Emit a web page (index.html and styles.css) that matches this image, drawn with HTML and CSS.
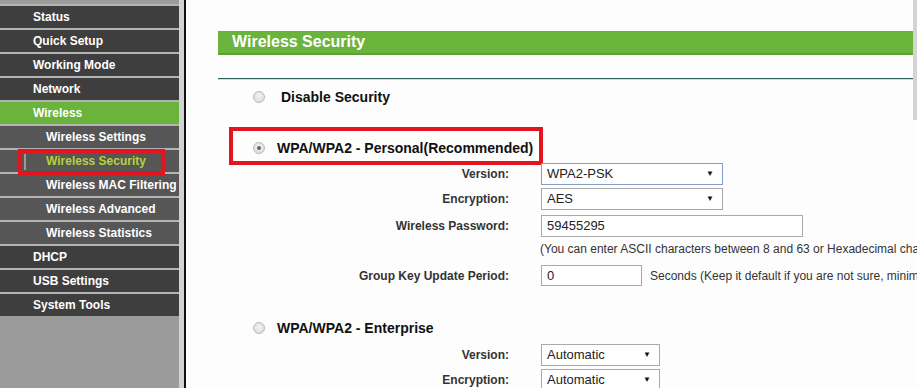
FILE: index.html
```html
<!DOCTYPE html>
<html>
<head>
<meta charset="utf-8">
<link rel="stylesheet" href="styles.css">
</head>
<body>
<nav class="sidebar">
  <ul class="menu">
    <li class="item">Status</li>
    <li class="item">Quick Setup</li>
    <li class="item">Working Mode</li>
    <li class="item">Network</li>
    <li class="item active">Wireless</li>
    <li class="item sub">Wireless Settings</li>
    <li class="item sub current"><span class="mark"></span>Wireless Security<span class="hl-box"></span></li>
    <li class="item sub">Wireless MAC Filtering</li>
    <li class="item sub">Wireless Advanced</li>
    <li class="item sub">Wireless Statistics</li>
    <li class="item">DHCP</li>
    <li class="item">USB Settings</li>
    <li class="item">System Tools</li>
  </ul>
</nav>
<main class="main">
  <div class="content">
    <h1 class="title">Wireless Security</h1>
    <div class="rule"></div>

    <div class="option opt-disable"><span class="radio"></span><span class="opt-label">Disable Security</span></div>

    <div class="option opt-personal"><span class="radio checked"></span><span class="opt-label">WPA/WPA2 - Personal(Recommended)</span></div>

    <div class="form">
      <div class="row r-version">
        <label class="lbl">Version:</label>
        <div class="select focus w182"><span>WPA2-PSK</span><span class="arrow">▼</span></div>
      </div>
      <div class="row r-enc">
        <label class="lbl">Encryption:</label>
        <div class="select w182"><span>AES</span><span class="arrow">▼</span></div>
      </div>
      <div class="row r-pwd">
        <label class="lbl">Wireless Password:</label>
        <div class="input w262">59455295</div>
      </div>
      <div class="row r-help">
        <span class="lbl"></span>
        <span class="help">(You can enter ASCII characters between 8 and 63 or Hexadecimal characters between 8 and 64.)</span>
      </div>
      <div class="row r-group">
        <label class="lbl">Group Key Update Period:</label>
        <div class="input w101">0</div>
        <span class="note">Seconds (Keep it default if you are not sure, minimum is 30, 0 means no update)</span>
      </div>
    </div>

    <div class="option opt-enterprise"><span class="radio"></span><span class="opt-label">WPA/WPA2 - Enterprise</span></div>

    <div class="form">
      <div class="row r-ever">
        <label class="lbl">Version:</label>
        <div class="select w119"><span>Automatic</span><span class="arrow">▼</span></div>
      </div>
      <div class="row r-eenc">
        <label class="lbl">Encryption:</label>
        <div class="select w119"><span>Automatic</span><span class="arrow">▼</span></div>
      </div>
    </div>
  </div>
  <div class="scrollbar"></div>
</main>
</body>
</html>
```

FILE: styles.css
```css
* { box-sizing: border-box; }
html, body { margin: 0; padding: 0; }
body {
  width: 917px;
  height: 388px;
  overflow: hidden;
  display: flex;
  font-family: "Liberation Sans", Arial, sans-serif;
  background: #fdfdfd;
}

/* sidebar */
.sidebar {
  width: 184px;
  flex: none;
  background: #9b9b9b;
  border-right: 5px solid #d2d2d2;
  padding-top: 4px;
  height: 388px;
}
.menu { list-style: none; margin: 0; padding: 0; }
.item {
  position: relative;
  height: 24px;
  border-top: 2px solid #b3b3b3;
  background: #3e3e3e;
  color: #fff;
  font-weight: bold;
  font-size: 12px;
  line-height: 22px;
  padding-left: 33px;
  white-space: nowrap;
}
.item.active { background: #6ab43c; }
.item.sub { background: #565656; padding-left: 46px; }
.item.current { color: #b4d336; }
.mark {
  position: absolute;
  left: 24px;
  top: 4px;
  width: 2px;
  height: 16px;
  background: #9a9a9a;
}
.hl-box {
  position: absolute;
  z-index: 2;
  left: 18px;
  top: -1px;
  width: 147px;
  height: 26px;
  border: 4px solid #e3141e;
}

/* main */
.main {
  flex: 1;
  display: flex;
  border-left: 2px solid #111;
  background: #fdfdfd;
  min-width: 0;
  position: relative;
}
.content {
  flex: 1;
  padding: 31px 0 0 32px;
  min-width: 0;
}
.scrollbar {
  position: absolute;
  right: 0;
  top: 0;
  width: 4px;
  height: 120px;
  background: #d3d3d3;
}
.title {
  margin: 0 4px 0 0;
  height: 24px;
  background: #6ab43c;
  border-bottom: 2px solid #5e9f36;
  color: #fff;
  font-size: 16px;
  font-weight: bold;
  line-height: 22px;
  padding-left: 14px;
}
.rule {
  margin: 23px 4px 0 0;
  height: 1px;
  background: #2f5f5c;
  box-shadow: 0 1px 0 #cfdede;
}

.option {
  display: flex;
  align-items: center;
  height: 20px;
  color: #111;
  font-size: 14px;
  font-weight: bold;
  white-space: nowrap;
}
.opt-disable { margin-top: 8px; padding-left: 35px; gap: 16px; }
.opt-personal {
  margin-top: 20px;
  margin-left: 11px;
  width: 314px;
  height: 38px;
  border: 4px solid #e3141e;
  padding-left: 20px;
  padding-top: 3px;
  gap: 12px;
}
.opt-enterprise { margin-top: 32px; padding-left: 35px; gap: 12px; }

.radio {
  width: 12px;
  height: 12px;
  border-radius: 50%;
  border: 1px solid #b9b9b9;
  background: radial-gradient(circle at 50% 40%, #f4f4f4, #d6d6d6);
  flex: none;
  position: relative;
}
.radio.checked::after {
  content: "";
  position: absolute;
  left: 3px; top: 3px;
  width: 4px; height: 4px;
  border-radius: 50%;
  background: #666;
}

.form { display: flex; flex-direction: column; }
.row {
  display: flex;
  align-items: center;
  gap: 32px;
  white-space: nowrap;
}
.lbl {
  width: 291px;
  flex: none;
  text-align: right;
  font-size: 12px;
  font-weight: bold;
  color: #333;
}
.r-version { margin-top: -2px; }
.r-enc { margin-top: 3px; }
.r-pwd { margin-top: 5px; }
.r-help { margin-top: 4px; height: 16px; }
.r-group { margin-top: 8px; }
.r-ever { margin-top: 6px; }
.r-eenc { margin-top: 3px; }

.select, .input {
  height: 22px;
  border: 1px solid #a9a9a9;
  background: #fff;
  font-size: 13px;
  color: #222;
  line-height: 20px;
  padding-left: 5px;
  flex: none;
}
.select { display: flex; justify-content: space-between; padding-right: 8px; }
.select.focus { border-color: #7f9fc9; }
.arrow { font-size: 8px; color: #111; }
.w182 { width: 182px; }
.w119 { width: 119px; }
.w262 { width: 262px; }
.w101 { width: 101px; height: 21px; }
.help {
  margin-left: -1px;
  font-size: 12px;
  color: #333;
}
.r-group { gap: 0; }
.r-group .lbl { margin-right: 32px; }
.note {
  margin-left: 8px;
  font-size: 12px;
  color: #333;
}
```
